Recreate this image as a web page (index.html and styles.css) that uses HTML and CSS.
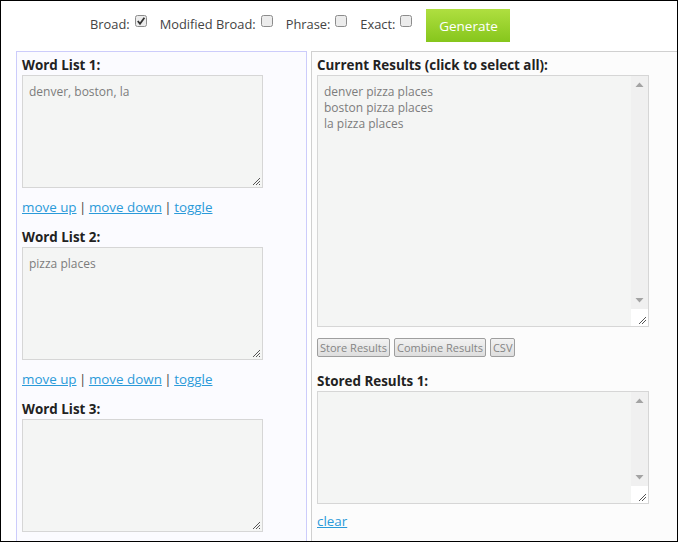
FILE: index.html
```html
<!DOCTYPE html>
<html>
<head>
<meta charset="utf-8">
<link rel="stylesheet" href="styles.css">
</head>
<body>
<div class="frame">
  <div class="topbar">
    <span class="opt">Broad:<span class="cb"><svg width="12" height="12" viewBox="0 0 12 12"><rect x="0.5" y="0.5" width="11" height="11" rx="2" fill="#ececec" stroke="#8c8c8c"/><path d="M2.8 6 L5 8.8 L9.4 2.8" fill="none" stroke="#333" stroke-width="1.8"/></svg></span></span>
    <span class="opt">Modified Broad:<span class="cb"><svg width="12" height="12" viewBox="0 0 12 12"><rect x="0.5" y="0.5" width="11" height="11" rx="2" fill="#ececec" stroke="#8c8c8c"/></svg></span></span>
    <span class="opt">Phrase:<span class="cb"><svg width="12" height="12" viewBox="0 0 12 12"><rect x="0.5" y="0.5" width="11" height="11" rx="2" fill="#ececec" stroke="#8c8c8c"/></svg></span></span>
    <span class="opt">Exact:<span class="cb"><svg width="12" height="12" viewBox="0 0 12 12"><rect x="0.5" y="0.5" width="11" height="11" rx="2" fill="#ececec" stroke="#8c8c8c"/></svg></span></span>
    <button class="generate">Generate</button>
  </div>
  <div class="panels">
    <div class="panel left">
      <div class="heading">Word List 1:</div>
      <div class="ta small"><div class="tatext">denver, boston, la</div><svg class="grip" width="9" height="9" viewBox="0 0 9 9"><path d="M1 8 L8 1 M4 8 L8 4 M7 8 L8 7" stroke="#555" stroke-width="1"/></svg></div>
      <div class="links"><a href="#">move up</a> | <a href="#">move down</a> | <a href="#">toggle</a></div>
      <div class="heading">Word List 2:</div>
      <div class="ta small"><div class="tatext">pizza places</div><svg class="grip" width="9" height="9" viewBox="0 0 9 9"><path d="M1 8 L8 1 M4 8 L8 4 M7 8 L8 7" stroke="#555" stroke-width="1"/></svg></div>
      <div class="links"><a href="#">move up</a> | <a href="#">move down</a> | <a href="#">toggle</a></div>
      <div class="heading">Word List 3:</div>
      <div class="ta small"><div class="tatext"></div><svg class="grip" width="9" height="9" viewBox="0 0 9 9"><path d="M1 8 L8 1 M4 8 L8 4 M7 8 L8 7" stroke="#555" stroke-width="1"/></svg></div>
    </div>
    <div class="panel right">
      <div class="heading">Current Results (click to select all):</div>
      <div class="ta wide tall">
        <div class="tatext">denver pizza places<br>boston pizza places<br>la pizza places</div>
        <div class="sbar">
          <div class="arrow"><svg width="9" height="5" viewBox="0 0 9 5"><path d="M0.5 5 L4.5 0.5 L8.5 5 Z" fill="#a3a3a3"/></svg></div>
          <div class="track"></div>
          <div class="arrow"><svg width="9" height="5" viewBox="0 0 9 5"><path d="M0.5 0 L4.5 4.5 L8.5 0 Z" fill="#a3a3a3"/></svg></div>
          <div class="corner"><svg width="9" height="9" viewBox="0 0 9 9"><path d="M1 8 L8 1 M4 8 L8 4" stroke="#555" stroke-width="1"/></svg></div>
        </div>
      </div>
      <div class="buttons"><button class="btn">Store Results</button><button class="btn">Combine Results</button><button class="btn">CSV</button></div>
      <div class="heading h2">Stored Results 1:</div>
      <div class="ta wide stored">
        <div class="tatext"></div>
        <div class="sbar">
          <div class="arrow"><svg width="9" height="5" viewBox="0 0 9 5"><path d="M0.5 5 L4.5 0.5 L8.5 5 Z" fill="#a3a3a3"/></svg></div>
          <div class="track"></div>
          <div class="arrow"><svg width="9" height="5" viewBox="0 0 9 5"><path d="M0.5 0 L4.5 4.5 L8.5 0 Z" fill="#a3a3a3"/></svg></div>
          <div class="corner"><svg width="9" height="9" viewBox="0 0 9 9"><path d="M1 8 L8 1 M4 8 L8 4" stroke="#555" stroke-width="1"/></svg></div>
        </div>
      </div>
      <div class="links clear"><a href="#">clear</a></div>
    </div>
  </div>
</div>
</body>
</html>
```
FILE: styles.css
```css
html, body {
  margin: 0;
  padding: 0;
  background: #fff;
}
body {
  font-family: "Open Sans", "Noto Sans", sans-serif;
  font-size: 13px;
  color: #333;
}
.frame {
  width: 678px;
  height: 542px;
  box-sizing: border-box;
  border: 1px solid #000;
  overflow: hidden;
}
.topbar {
  height: 50px;
  box-sizing: border-box;
  padding: 8px 0 0 89px;
  display: flex;
  align-items: flex-start;
}
.opt {
  display: flex;
  align-items: center;
  color: #444;
  font-size: 12.85px;
  height: 29px;
  margin-right: 13px;
}
.cb {
  display: inline-flex;
  margin-left: 5px;
  margin-top: -5px;
}
.generate {
  margin-left: 1px;
  width: 84px;
  height: 33px;
  border: none;
  background: linear-gradient(#afdf40, #86c61c);
  color: #fff;
  font-family: "Open Sans", sans-serif;
  font-size: 13.5px;
  padding: 0;
}
.panels {
  display: flex;
  gap: 4px;
  padding-left: 15px;
}
.panel {
  flex-shrink: 0;
  box-sizing: border-box;
  height: 520px;
  padding: 4px 5px 0 5px;
}
.left {
  width: 291px;
  border: 1px solid #ccccfb;
  background: #fbfbff;
}
.right {
  width: 380px;
  border: 1px solid #d0d0d0;
  background: #fcfcfc;
}
.heading {
  font-weight: bold;
  font-size: 13.4px;
  line-height: 19px;
  color: #222;
}
.ta {
  box-sizing: border-box;
  border: 1px solid #d6d6d6;
  background: #f4f5f4;
  position: relative;
  display: flex;
}
.small {
  width: 241px;
  height: 113px;
}
.wide {
  width: 332px;
}
.tall {
  height: 252px;
}
.stored {
  height: 113px;
}
.tatext {
  flex: 1;
  padding: 8px 6px;
  font-size: 12px;
  line-height: 16px;
  color: #7c7c7c;
}
.grip {
  position: absolute;
  right: 1px;
  bottom: 1px;
}
.sbar {
  width: 17px;
  display: flex;
  flex-direction: column;
  background: #f0f0f0;
}
.arrow {
  height: 17px;
  display: flex;
  align-items: center;
  justify-content: center;
}
.track {
  flex: 1;
}
.corner {
  height: 17px;
  background: #fff;
  display: flex;
  align-items: flex-end;
  justify-content: flex-end;
  padding: 0 1px 1px 0;
  box-sizing: border-box;
}
.links {
  margin: 9px 0 11px 0;
  line-height: 20px;
  font-size: 13.4px;
  color: #444;
  word-spacing: -1px;
}
.links a {
  color: #2b9ad9;
  text-decoration: underline;
  word-spacing: 0;
}
.clear {
  margin-top: 7px;
}
.buttons {
  display: flex;
  gap: 4px;
  margin-top: 11px;
  height: 19px;
}
.btn {
  box-sizing: border-box;
  height: 19px;
  padding: 0 2px;
  border: 1px solid #9e9e9e;
  border-radius: 2px;
  background: linear-gradient(#f2f2f2, #dedede);
  color: #858585;
  font-family: "Open Sans", sans-serif;
  font-size: 11px;
  line-height: 17px;
}
.h2 {
  margin-top: 15px;
}
```
